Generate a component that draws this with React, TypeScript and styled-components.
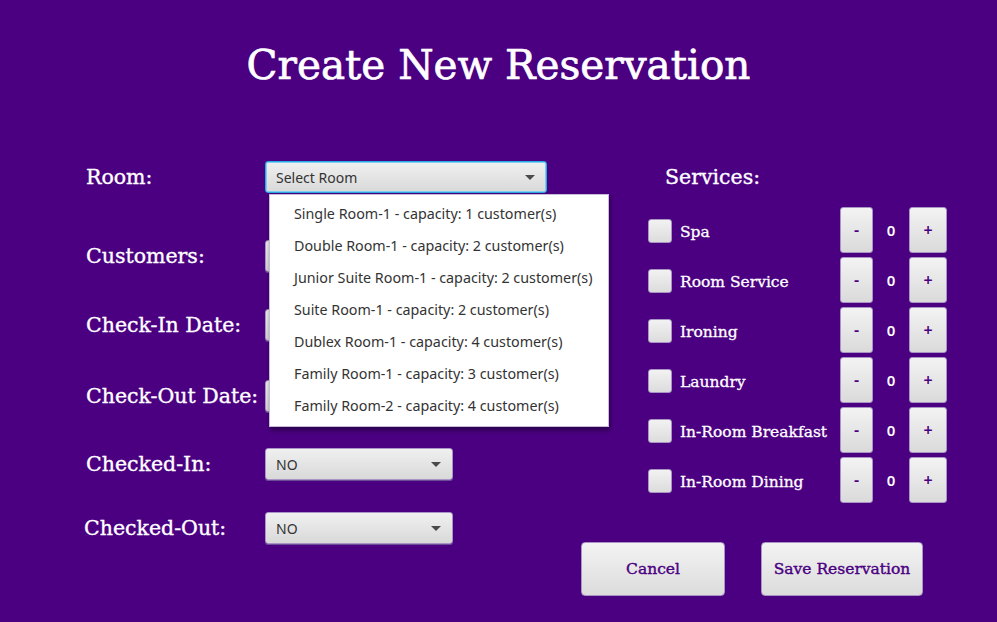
import React from "react";
import styled, { createGlobalStyle } from "styled-components";

const Global = createGlobalStyle`
  html, body { margin: 0; padding: 0; background: #4b0082; }
  body { width: 997px; height: 622px; overflow: hidden; }
`;

const slab = `"DejaVu Serif", serif`;
const ui = `"Noto Sans", "Open Sans", sans-serif`;

const Page = styled.div`
  width: 997px;
  height: 622px;
  box-sizing: border-box;
  display: flex;
  flex-direction: column;
  color: #fff;
`;

const Title = styled.h1`
  margin: 40px 0 0;
  height: 50px;
  line-height: 50px;
  text-align: center;
  font-family: ${slab};
  font-weight: normal;
  font-size: 40.5px;
  color: #fff;
  -webkit-text-stroke: 0.7px #fff;
`;

const Body = styled.div`
  display: flex;
  margin-top: 71px;
`;

const LeftCol = styled.div`
  display: flex;
  flex-direction: column;
  padding-left: 86px;
  width: 581px;
  flex-shrink: 0;
  box-sizing: border-box;
`;

const Row = styled.div<{ $mt: number }>`
  display: flex;
  align-items: center;
  height: 32px;
  margin-top: ${(p) => p.$mt}px;
  position: relative;
`;

const Label = styled.div<{ $dx?: number }>`
  flex-shrink: 0;
  width: ${(p) => 179 - (p.$dx || 0)}px;
  margin-left: ${(p) => p.$dx || 0}px;
  font-family: ${slab};
  font-size: 20.5px;
  color: #fff;
  white-space: nowrap;
  -webkit-text-stroke: 0.35px #fff;
`;

const Combo = styled.div<{ $w: number; $focused?: boolean }>`
  position: relative;
  flex-shrink: 0;
  width: ${(p) => p.$w}px;
  height: 32px;
  box-sizing: border-box;
  display: flex;
  align-items: center;
  padding-left: 10px;
  border-radius: 3px;
  background: linear-gradient(#f0f0f0, #d9d9d9);
  border: 1px solid ${(p) => (p.$focused ? "#2aa9e0" : "#a995c4")};
  box-shadow: ${(p) => (p.$focused ? "0 0 0 1px #7fd0f0 inset" : "0 1px 0 #6c4c98")};
  font-family: ${ui};
  font-size: 14px;
  color: #333;
`;

const Arrow = styled.span`
  position: absolute;
  right: 11px;
  top: 13px;
  width: 0;
  height: 0;
  border-left: 5px solid transparent;
  border-right: 5px solid transparent;
  border-top: 5px solid #4a4a4a;
`;

const Popup = styled.div`
  position: absolute;
  left: 183px;
  top: 33px;
  width: 340px;
  height: 233px;
  box-sizing: border-box;
  background: #fff;
  border: 1px solid #c9bcd9;
  box-shadow: 1px 3px 5px rgba(0, 0, 0, 0.45);
  z-index: 10;
  padding-top: 3px;
  display: flex;
  flex-direction: column;
`;

const Option = styled.div`
  height: 32px;
  line-height: 32px;
  padding-left: 24px;
  font-family: ${ui};
  font-size: 14.3px;
  color: #333;
  white-space: nowrap;
`;

const RightCol = styled.div`
  display: flex;
  flex-direction: column;
  width: 366px;
  flex-shrink: 0;
`;

const ServicesTitle = styled.div`
  height: 32px;
  line-height: 32px;
  padding-left: 84px;
  font-family: ${slab};
  font-size: 20.5px;
  color: #fff;
  -webkit-text-stroke: 0.35px #fff;
`;

const ServiceList = styled.div`
  display: flex;
  flex-direction: column;
  margin-top: 12px;
  padding-left: 67px;
`;

const ServiceRow = styled.div`
  display: grid;
  grid-template-columns: 24px 168px 33px 36px 38px;
  align-items: center;
  height: 50px;
`;

const Check = styled.div`
  width: 24px;
  height: 24px;
  margin-top: 2px;
  box-sizing: border-box;
  border-radius: 3px;
  background: linear-gradient(#f2f2f2, #dcdcdc);
  border: 1px solid #a995c4;
`;

const ServiceName = styled.div`
  padding-left: 8px;
  padding-top: 3px;
  font-family: ${slab};
  font-size: 15.5px;
  color: #fff;
  white-space: nowrap;
  -webkit-text-stroke: 0.3px #fff;
`;

const StepBtn = styled.div`
  height: 46px;
  box-sizing: border-box;
  border-radius: 3px;
  background: linear-gradient(#f3f3f3, #dadada);
  border: 1px solid #a995c4;
  display: flex;
  align-items: center;
  justify-content: center;
  font-family: ${ui};
  font-size: 16px;
  font-weight: 600;
  color: #4b0082;
`;

const Count = styled.div`
  text-align: center;
  font-family: ${ui};
  font-size: 15px;
  font-weight: 600;
  color: #fff;
`;

const Actions = styled.div`
  display: flex;
  gap: 36px;
  margin-top: 37px;
`;

const ActionBtn = styled.div<{ $w: number }>`
  width: ${(p) => p.$w}px;
  height: 54px;
  box-sizing: border-box;
  border-radius: 4px;
  background: linear-gradient(#f3f3f3, #dcdcdc);
  border: 1px solid #a995c4;
  display: flex;
  align-items: center;
  justify-content: center;
  font-family: ${slab};
  font-size: 15.5px;
  color: #4b0082;
  -webkit-text-stroke: 0.4px #4b0082;
`;

const rooms = [
  "Single Room-1 - capacity: 1 customer(s)",
  "Double Room-1 - capacity: 2 customer(s)",
  "Junior Suite Room-1 - capacity: 2 customer(s)",
  "Suite Room-1 - capacity: 2 customer(s)",
  "Dublex Room-1 - capacity: 4 customer(s)",
  "Family Room-1 - capacity: 3 customer(s)",
  "Family Room-2 - capacity: 4 customer(s)",
];

const services = ["Spa", "Room Service", "Ironing", "Laundry", "In-Room Breakfast", "In-Room Dining"];

export default function App() {
  return (
    <Page>
      <Global />
      <Title>Create New Reservation</Title>
      <Body>
        <LeftCol>
          <Row $mt={0}>
            <Label>Room:</Label>
            <Combo $w={282} $focused>
              Select Room
              <Arrow />
            </Combo>
            <Popup>
              {rooms.map((r) => (
                <Option key={r}>{r}</Option>
              ))}
            </Popup>
          </Row>
          <Row $mt={47}>
            <Label>Customers:</Label>
            <Combo $w={188}>
              <Arrow />
            </Combo>
          </Row>
          <Row $mt={37}>
            <Label>Check-In Date:</Label>
            <Combo $w={188} />
          </Row>
          <Row $mt={39}>
            <Label>Check-Out Date:</Label>
            <Combo $w={188} />
          </Row>
          <Row $mt={36}>
            <Label>Checked-In:</Label>
            <Combo $w={188}>
              NO
              <Arrow />
            </Combo>
          </Row>
          <Row $mt={32}>
            <Label $dx={-2}>Checked-Out:</Label>
            <Combo $w={188}>
              NO
              <Arrow />
            </Combo>
          </Row>
        </LeftCol>
        <RightCol>
          <ServicesTitle>Services:</ServicesTitle>
          <ServiceList>
            {services.map((s) => (
              <ServiceRow key={s}>
                <Check />
                <ServiceName>{s}</ServiceName>
                <StepBtn>-</StepBtn>
                <Count>0</Count>
                <StepBtn>+</StepBtn>
              </ServiceRow>
            ))}
          </ServiceList>
          <Actions>
            <ActionBtn $w={144}>Cancel</ActionBtn>
            <ActionBtn $w={162}>Save Reservation</ActionBtn>
          </Actions>
        </RightCol>
      </Body>
    </Page>
  );
}
